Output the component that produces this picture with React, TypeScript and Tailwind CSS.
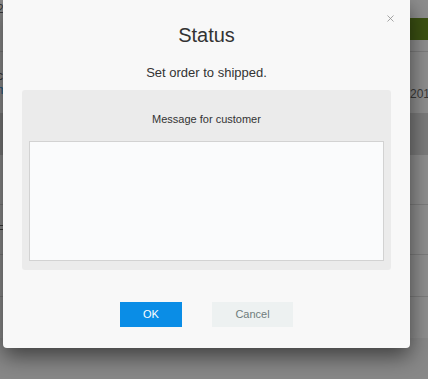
import { X } from 'lucide-react';

const bgRows = [
  { id: 'r1', h: 'h-[18px]', left: '2', right: '' },
  { id: 'r2', h: 'h-[22px]', left: '', right: '', green: true },
  { id: 'r3', h: 'h-[12px]', left: '', right: '', line: true },
  { id: 'r4', h: 'h-[61px]', left: 'c', right: '201', blue: true },
  { id: 'r5', h: 'h-[42px]', left: '', right: '', dark: true },
  { id: 'r6', h: 'h-[50px]', left: '', right: '', line: true },
  { id: 'r7', h: 'h-[50px]', left: 'F', right: '', line: true },
  { id: 'r8', h: 'h-[42px]', left: '', right: '', line: true },
  { id: 'r9', h: 'h-[41px]', left: '', right: '' },
];

const App = () => {
  return (
    <div
      className="relative w-[428px] h-[379px] overflow-hidden bg-[#888888]"
      style={{ fontFamily: '"Liberation Sans", Arial, sans-serif' }}
    >
      {/* 뒤쪽 페이지 (오버레이로 어두워진 상태) */}
      <div className="flex flex-col bg-[#8e8e8e] text-[12px] text-[#3a3a3a]">
        {bgRows.map((row) => {
          return (
            <div
              key={row.id}
              className={`${row.h} flex items-center justify-between ${row.line ? 'border-b border-[#7c7c7c]' : ''} ${row.dark ? 'bg-[#7b7b7b]' : ''}`}
            >
              <span className="-ml-[3px] flex flex-col leading-[14px]">
                {row.left}
                {row.blue && <span className="text-[#1f5a85]">m</span>}
              </span>
              {row.green && <div className="h-full w-[60px] bg-[#3b5012]" />}
              {row.right && <span className="mt-[22px] -mr-[2px]">{row.right}</span>}
            </div>
          );
        })}
      </div>

      {/* 모달 */}
      <div className="absolute left-[3px] top-0 w-[407px] h-[348px] rounded-b-[4px] bg-[#f8f8f8] shadow-[0_8px_22px_rgba(0,0,0,0.55)] flex flex-col items-center text-[#333333]">
        <button className="absolute right-[14px] top-[13px] text-[#8e8e8e]" aria-label="Close">
          <X className="h-[11px] w-[11px]" strokeWidth={1.7} />
        </button>
        <h2 className="mt-[23px] text-[20px] leading-[24px]">Status</h2>
        <p className="mt-[18px] text-[13px] leading-[16px]">Set order to shipped.</p>
        <div className="mt-[9px] w-[369px] self-start ml-[19px] rounded-[3px] bg-[#ebebeb] px-[7px] pt-[22px] pb-[9px] flex flex-col items-center">
          <span className="text-[11px] leading-[14px]">Message for customer</span>
          <textarea className="mt-[15px] h-[120px] w-full resize-none border border-[#d2d2d2] bg-[#fafbfc] outline-none" />
        </div>
        <div className="mt-[32px] flex gap-[30px]">
          <button className="h-[25px] w-[62px] bg-[#0a8de6] text-[11px] text-white">OK</button>
          <button className="h-[25px] w-[81px] bg-[#edf1f1] text-[11px] text-[#6f7c7c]">Cancel</button>
        </div>
      </div>
    </div>
  );
};

export default App;
